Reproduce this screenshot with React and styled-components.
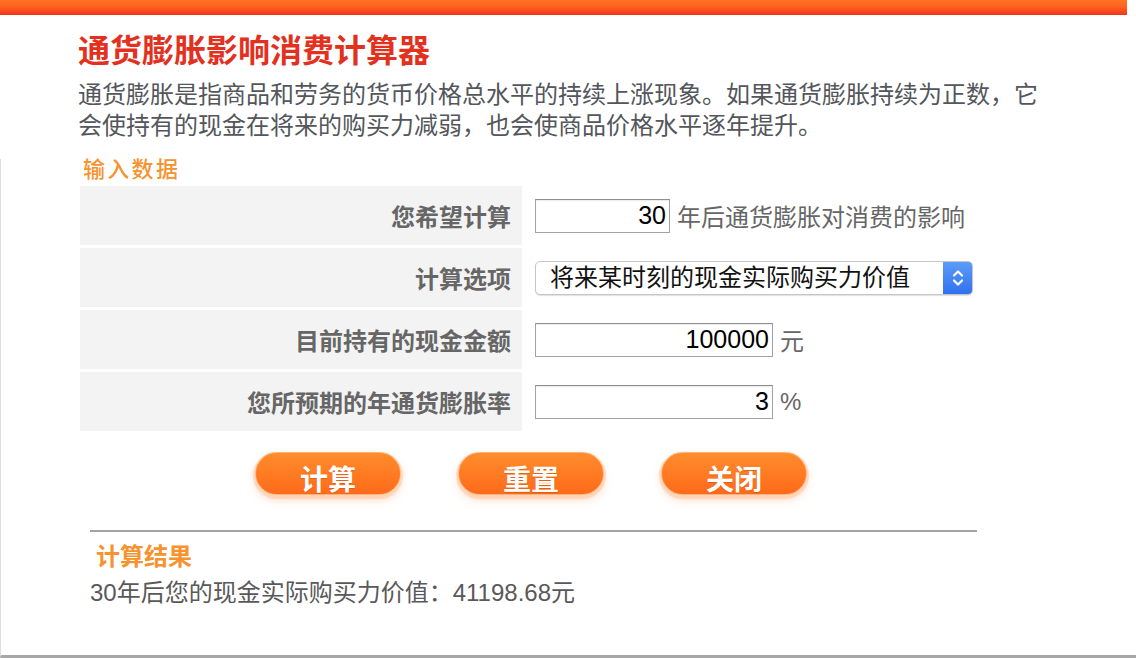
import React from 'react';
import styled, { createGlobalStyle } from 'styled-components';

const GlobalStyle = createGlobalStyle`
  html, body { margin: 0; padding: 0; background: #fff; }
  body {
    width: 1136px;
    height: 658px;
    overflow: hidden;
    font-family: "Liberation Sans", "Noto Sans CJK SC", "Noto Sans", sans-serif;
  }
  * { box-sizing: border-box; }
`;

const TopBar = styled.div`
  width: 1127px;
  height: 15px;
  background: linear-gradient(#ff7427 0%, #ff611f 45%, #f3351c 100%);
`;

const Header = styled.header`
  padding: 12px 0 0 78px;
`;

const Title = styled.h1`
  margin: 0;
  font-family: "Noto Sans CJK SC", sans-serif;
  font-size: 32px;
  line-height: 42px;
  font-weight: 700;
  color: #e3311f;
`;

const Intro = styled.p`
  margin: 10px 0 0;
  width: 970px;
  font-size: 24px;
  line-height: 31px;
  color: #53565b;
`;

const Panel = styled.main`
  margin-top: 18px;
  height: 499px;
  border-left: 1px solid #dedede;
  border-bottom: 3px solid #a7a7a7;
  display: flex;
  flex-direction: column;
`;

const SectionTitle = styled.h2`
  margin: ${p => p.$top}px 0 0 ${p => p.$left}px;
  font-size: ${p => p.$size}px;
  line-height: ${p => p.$size}px;
  letter-spacing: ${p => p.$spacing || 0}px;
  font-weight: ${p => p.$weight};
  color: #f5932f;
`;

const Form = styled.div`
  margin: 5px 0 0 79px;
  display: grid;
  grid-template-columns: 442px 1fr;
  grid-auto-rows: 59px;
  row-gap: 3px;
  column-gap: 13px;
`;

const Label = styled.div`
  background: #f3f3f3;
  display: flex;
  align-items: center;
  justify-content: flex-end;
  padding-right: 11px;
  font-size: 24px;
  font-weight: 700;
  color: #666;
`;

const Field = styled.div`
  display: flex;
  align-items: center;
  gap: 7px;
  font-size: 24px;
  color: #666;
`;

const NumInput = styled.input`
  width: ${p => p.$w}px;
  height: 34px;
  border: 1px solid #a2a2a2;
  border-top-color: #8e8e8e;
  box-shadow: inset 0 1px 1px rgba(0, 0, 0, 0.08);
  padding: 0 3px 0 4px;
  font-family: "Liberation Sans", sans-serif;
  font-size: 25px;
  color: #000;
  text-align: right;
  background: #fff;
  outline: none;
`;

const SelectBox = styled.div`
  width: 438px;
  height: 34px;
  display: flex;
  border: 1px solid #c6c6c6;
  border-radius: 5px;
  overflow: hidden;
  box-shadow: 0 1px 1px rgba(0, 0, 0, 0.12);
  background: #fff;
`;

const Select = styled.select`
  flex: 1;
  appearance: none;
  -webkit-appearance: none;
  border: none;
  background: transparent;
  padding: 0 0 0 14px;
  font-family: "Liberation Sans", "Noto Sans CJK SC", sans-serif;
  font-size: 24px;
  color: #111;
  outline: none;
`;

const Stepper = styled.span`
  width: 29px;
  display: flex;
  align-items: center;
  justify-content: center;
  background: linear-gradient(#5b9cf7, #2f72ef);
`;

const ButtonRow = styled.div`
  margin: 21px 0 0 254px;
  display: flex;
  gap: 57px;
`;

const ActionButton = styled.button`
  width: 146px;
  height: 43px;
  border-radius: 22px;
  border: 1px solid #ffb27a;
  background: linear-gradient(#ff8d2c, #ff6a1a);
  box-shadow: 0 2px 1px 2px rgba(255, 205, 170, 0.7), 0 5px 9px rgba(255, 140, 70, 0.3);
  color: #fff;
  font-family: "Noto Sans CJK SC", sans-serif;
  font-size: 28px;
  font-weight: 700;
  line-height: 1;
  padding: 9px 0 0;
  text-shadow: 0 1px 1px rgba(170, 60, 0, 0.35);
  cursor: pointer;
`;

const Divider = styled.hr`
  margin: 35px 0 0 89px;
  width: 887px;
  height: 2px;
  border: none;
  background: #a3a3a3;
`;

const ResultText = styled.p`
  margin: 12px 0 0 89px;
  font-size: 24px;
  line-height: 24px;
  color: #595959;
`;

const Chevrons = () => (
  <svg width="14" height="20" viewBox="0 0 14 20" fill="none" stroke="#fff" strokeWidth="2.2" strokeLinecap="round" strokeLinejoin="round">
    <path d="M3 7.5 L7 3.5 L11 7.5" />
    <path d="M3 12.5 L7 16.5 L11 12.5" />
  </svg>
);

const rows = [
  { label: '您希望计算', kind: 'years' },
  { label: '计算选项', kind: 'select' },
  { label: '目前持有的现金金额', kind: 'cash' },
  { label: '您所预期的年通货膨胀率', kind: 'rate' },
];

export default function App() {
  return (
    <>
      <GlobalStyle />
      <TopBar />
      <Header>
        <Title>通货膨胀影响消费计算器</Title>
        <Intro>
          通货膨胀是指商品和劳务的货币价格总水平的持续上涨现象。如果通货膨胀持续为正数，它会使持有的现金在将来的购买力减弱，也会使商品价格水平逐年提升。
        </Intro>
      </Header>
      <Panel>
        <SectionTitle $top={0} $left={82} $size={22} $spacing={2.3} $weight={500}>输入数据</SectionTitle>
        <Form>
          {rows.map(r => (
            <React.Fragment key={r.label}>
              <Label>{r.label}</Label>
              <Field>
                {r.kind === 'years' && (
                  <>
                    <NumInput $w={135} defaultValue="30" />
                    <span>年后通货膨胀对消费的影响</span>
                  </>
                )}
                {r.kind === 'select' && (
                  <SelectBox>
                    <Select defaultValue="a">
                      <option value="a">将来某时刻的现金实际购买力价值</option>
                      <option value="b">将来某时刻需要多少现金</option>
                    </Select>
                    <Stepper><Chevrons /></Stepper>
                  </SelectBox>
                )}
                {r.kind === 'cash' && (
                  <>
                    <NumInput $w={238} defaultValue="100000" />
                    <span>元</span>
                  </>
                )}
                {r.kind === 'rate' && (
                  <>
                    <NumInput $w={238} defaultValue="3" />
                    <span>%</span>
                  </>
                )}
              </Field>
            </React.Fragment>
          ))}
        </Form>
        <ButtonRow>
          <ActionButton>计算</ActionButton>
          <ActionButton>重置</ActionButton>
          <ActionButton>关闭</ActionButton>
        </ButtonRow>
        <Divider />
        <SectionTitle $top={13} $left={95} $size={24} $weight={700}>计算结果</SectionTitle>
        <ResultText>30年后您的现金实际购买力价值：41198.68元</ResultText>
      </Panel>
    </>
  );
}
